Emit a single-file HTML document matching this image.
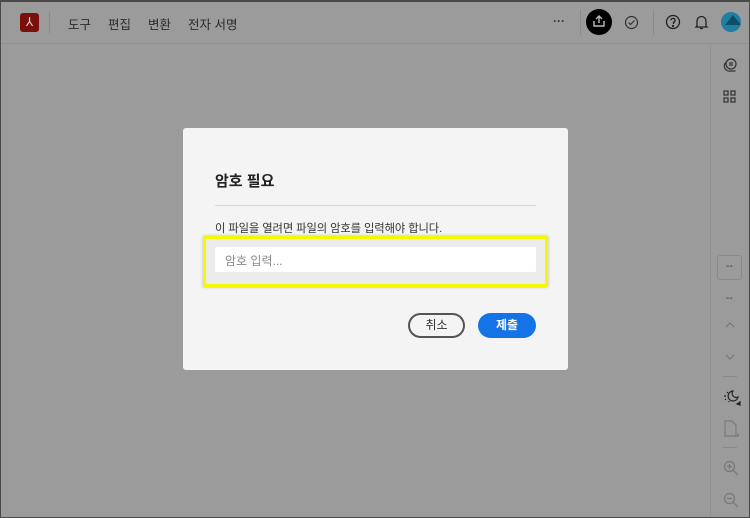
<!DOCTYPE html>
<html><head><meta charset="utf-8"><style>
*{margin:0;padding:0;box-sizing:border-box}
body{width:750px;height:518px;background:#9b9b9b;font-family:"Liberation Sans","Noto Sans CJK KR",sans-serif;position:relative;overflow:hidden}
.frame{position:absolute;inset:0;border:1px solid #4a4a4a;border-top:2px solid #4a4a4a}
.top{position:absolute;left:0;top:0;width:750px;height:44px;border-bottom:1px solid #8f8f8f}
.logo{position:absolute;left:20px;top:13px;width:19px;height:19px;background:#7a0f0b;border-radius:3px;color:#ddd;font-size:12px;text-align:center;line-height:19px}
.vs{position:absolute;width:1px;background:#8a8a8a}
.menu{position:absolute;top:14px;font-size:12.5px;color:#2a2a2a}
.side{position:absolute;left:710px;top:45px;width:1px;height:472px;background:#8f8f8f}
.ic{position:absolute;color:#333}
.dlg{position:absolute;left:183px;top:128px;width:385px;height:242px;background:#f4f4f4;border-radius:3px}
.t{position:absolute;left:32px;top:42px;font-size:15px;font-weight:bold;color:#222}
.hr{position:absolute;left:32px;top:77px;width:321px;height:1px;background:#d8d8d8}
.p{position:absolute;left:32px;top:92px;font-size:11.3px;color:#333;letter-spacing:-0.1px}
.y{position:absolute;left:20px;top:108px;width:345px;height:51px;border:3px solid #f7f700;background:#ececec;box-shadow:0 0 3px #bbb}
.in{position:absolute;left:32px;top:119px;width:321px;height:25px;background:#fff;border-radius:2px;font-size:12px;color:#888;padding:5px 10px}
.b1{position:absolute;left:225px;top:185px;width:57px;height:25px;border:2px solid #555;border-radius:13px;font-size:12px;text-align:center;line-height:21px;color:#333}
.b2{position:absolute;left:295px;top:185px;width:58px;height:25px;background:#1473e6;border-radius:13px;font-size:12px;font-weight:bold;text-align:center;line-height:25px;color:#fff}
</style></head><body>
<div class="top"></div>
<div class="logo">⅄</div>
<div class="vs" style="left:49px;top:12px;height:22px"></div>
<div class="menu" style="left:68px">도구</div>
<div class="menu" style="left:108px">편집</div>
<div class="menu" style="left:148px">변환</div>
<div class="menu" style="left:188px">전자 서명</div>
<div class="ic" style="left:553px;top:14px;font-size:12px;font-weight:bold">···</div>
<div class="vs" style="left:580px;top:10px;height:25px"></div>
<div style="position:absolute;left:586px;top:9px;width:26px;height:26px;border-radius:50%;background:#000"></div>
<svg style="position:absolute;left:592px;top:14px" width="14" height="14" viewBox="0 0 14 14" fill="none" stroke="#bbb" stroke-width="1.4"><path d="M7 9V2M4 5l3-3 3 3M2 7v5h10V7"/></svg>
<svg style="position:absolute;left:624px;top:15px" width="15" height="15" viewBox="0 0 15 15" fill="none" stroke="#333" stroke-width="1.2"><circle cx="7.5" cy="7.5" r="6"/><path d="M4.5 7.5l2 2 4-4"/></svg>
<div class="vs" style="left:653px;top:10px;height:25px"></div>
<svg style="position:absolute;left:665px;top:14px" width="16" height="16" viewBox="0 0 16 16" fill="none" stroke="#222" stroke-width="1.3"><circle cx="8" cy="8" r="6.5"/><path d="M6 6.3a2 2 0 1 1 2.5 2V10"/><circle cx="8" cy="12" r=".5"/></svg>
<svg style="position:absolute;left:694px;top:14px" width="15" height="16" viewBox="0 0 15 16" fill="none" stroke="#222" stroke-width="1.3"><path d="M3 12V7a4.5 4.5 0 0 1 9 0v5l1 1H2zM6 14.5h3"/></svg>
<div style="position:absolute;left:721px;top:12px;width:20px;height:20px;border-radius:50%;background:#1e7fa0;overflow:hidden"><div style="position:absolute;left:4px;top:3px;width:0;height:0;border-left:8px solid transparent;border-right:8px solid transparent;border-bottom:10px solid #0d4f67"></div></div>
<div class="side"></div>
<svg style="position:absolute;left:722px;top:57px" width="16" height="16" viewBox="0 0 16 16" fill="none" stroke="#333" stroke-width="1.2"><circle cx="9" cy="7" r="5"/><path d="M4.5 5a5 5 0 0 0 4 9h5M7 6h4M7 8h4"/></svg>
<svg style="position:absolute;left:723px;top:90px" width="13" height="13" viewBox="0 0 13 13" fill="none" stroke="#333" stroke-width="1.2"><rect x="1" y="1" width="4" height="4"/><rect x="8" y="1" width="4" height="4"/><rect x="1" y="8" width="4" height="4"/><rect x="8" y="8" width="4" height="4"/></svg>
<div style="position:absolute;left:717px;top:255px;width:25px;height:25px;border:1px solid #8a8a8a;border-radius:3px;font-size:10px;text-align:center;line-height:22px;color:#333">--</div>
<div class="ic" style="left:726px;top:293px;font-size:10px">--</div>
<svg style="position:absolute;left:724px;top:321px" width="12" height="8" fill="none" stroke="#777" stroke-width="1.2"><path d="M2 6l4-4 4 4"/></svg>
<svg style="position:absolute;left:724px;top:353px" width="12" height="8" fill="none" stroke="#777" stroke-width="1.2"><path d="M2 2l4 4 4-4"/></svg>
<div style="position:absolute;left:723px;top:376px;width:14px;height:1px;background:#888"></div>
<svg style="position:absolute;left:721px;top:388px" width="20" height="18" fill="none" stroke="#222" stroke-width="1.2"><path d="M12 3a5 5 0 1 0 5 6 4 4 0 0 1-5-6z"/><path d="M3 8h2M6 4l1 1M4 12l1-1M8 14v-1"/><path d="M16 16l3-2v3z" fill="#222"/></svg>
<svg style="position:absolute;left:723px;top:420px" width="16" height="18" fill="none" stroke="#7a7a7a" stroke-width="1.2"><path d="M2 1h7l4 4v11H2z"/><path d="M14 16l2-2v2z" fill="#777"/></svg>
<div style="position:absolute;left:723px;top:447px;width:14px;height:1px;background:#888"></div>
<svg style="position:absolute;left:723px;top:460px" width="16" height="16" fill="none" stroke="#777" stroke-width="1.2"><circle cx="6.5" cy="6.5" r="5"/><path d="M10 10l5 5M4 6.5h5M6.5 4v5"/></svg>
<svg style="position:absolute;left:723px;top:492px" width="16" height="16" fill="none" stroke="#777" stroke-width="1.2"><circle cx="6.5" cy="6.5" r="5"/><path d="M10 10l5 5M4 6.5h5"/></svg>
<div class="dlg">
<div class="t">암호 필요</div>
<div class="hr"></div>
<div class="p">이 파일을 열려면 파일의 암호를 입력해야 합니다.</div>
<div class="y"></div>
<div class="in">암호 입력...</div>
<div class="b1">취소</div>
<div class="b2">제출</div>
</div>
<div class="frame"></div>
</body></html>
